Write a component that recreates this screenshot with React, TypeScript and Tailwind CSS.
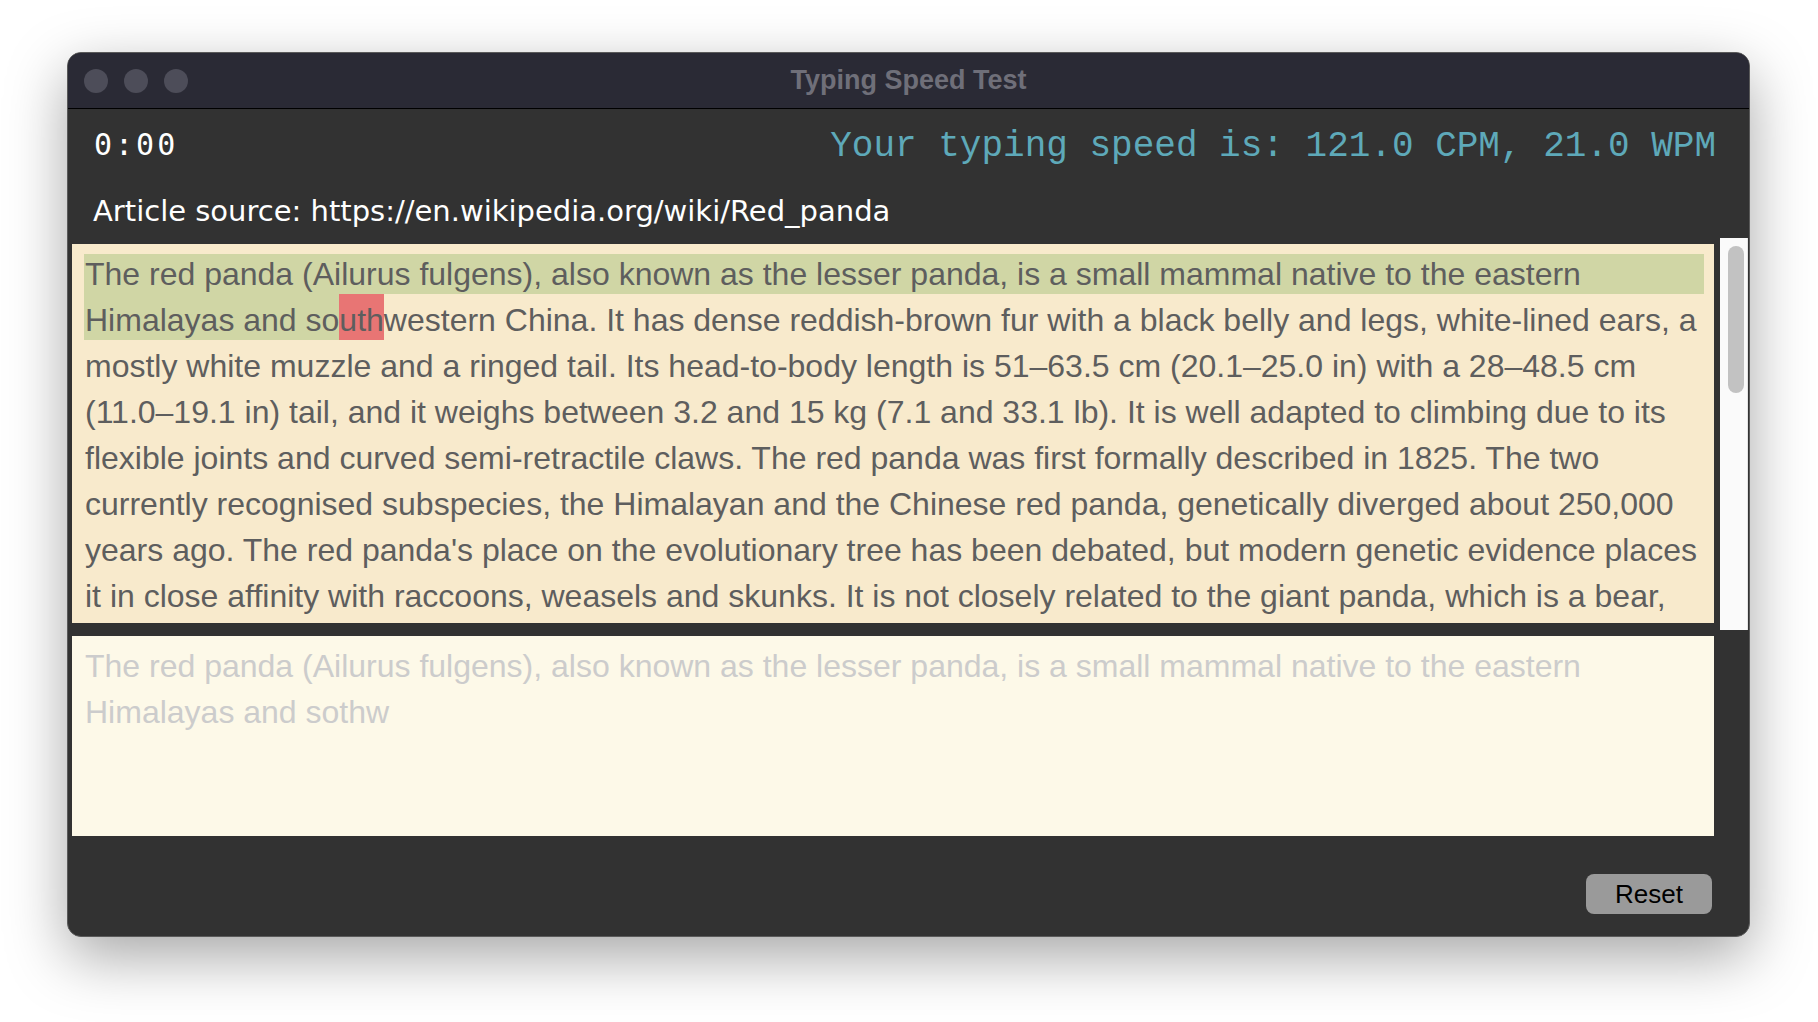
import React from 'react';

const articleLines = [
  'mostly white muzzle and a ringed tail. Its head-to-body length is 51–63.5 cm (20.1–25.0 in) with a 28–48.5 cm',
  '(11.0–19.1 in) tail, and it weighs between 3.2 and 15 kg (7.1 and 33.1 lb). It is well adapted to climbing due to its',
  'flexible joints and curved semi-retractile claws. The red panda was first formally described in 1825. The two',
  'currently recognised subspecies, the Himalayan and the Chinese red panda, genetically diverged about 250,000',
  "years ago. The red panda's place on the evolutionary tree has been debated, but modern genetic evidence places",
  'it in close affinity with raccoons, weasels and skunks. It is not closely related to the giant panda, which is a bear,',
];

const App: React.FC = () => {
  return (
    <div className="min-h-screen w-full bg-white pl-[67px] pt-[52px]">
      <div className="flex h-[885px] w-[1683px] flex-col overflow-hidden rounded-[14px] border border-[#5a5a5a] bg-[#323232] shadow-[0_20px_60px_rgba(0,0,0,0.35)]">
        {/* Title bar */}
        <div className="grid h-[56px] shrink-0 grid-cols-[1fr_auto_1fr] items-center border-b border-black bg-[#2a2a35] px-[16px]">
          <div className="flex gap-[16px]">
            <span className="h-[24px] w-[24px] rounded-full bg-[#4d4d59]" />
            <span className="h-[24px] w-[24px] rounded-full bg-[#4d4d59]" />
            <span className="h-[24px] w-[24px] rounded-full bg-[#4d4d59]" />
          </div>
          <div className="font-['Liberation_Sans',Arial,sans-serif] text-[27px] font-bold text-[#6f6f79]">
            Typing Speed Test
          </div>
          <div />
        </div>

        <div className="flex flex-1 flex-col pl-[4px] pr-[1px]">
          {/* Timer + speed */}
          <div className="flex h-[64px] shrink-0 items-center justify-between pl-[22px] pr-[32px] pt-[12px]">
            <span className="mb-[4px] font-['DejaVu_Sans_Mono',monospace] text-[30px] leading-none tracking-[3px] text-white">
              0:00
            </span>
            <span className="font-['Liberation_Mono','Courier_New',monospace] text-[36px] leading-none text-[#5ea9b9]">
              Your typing speed is: 121.0 CPM, 21.0 WPM
            </span>
          </div>

          {/* Source */}
          <div className="flex h-[65px] shrink-0 items-center pl-[21px] pt-[12px] font-['DejaVu_Sans',sans-serif] text-[29px] leading-none text-white">
            Article source: https://en.wikipedia.org/wiki/Red_panda
          </div>

          {/* Article + scrollbar */}
          <div className="flex h-[392px] shrink-0 gap-[6px]">
            <div className="mt-[6px] h-[379px] w-[1642px] overflow-hidden bg-[#f8eacc] pl-[12px] pr-[10px] pt-[10px] font-['Liberation_Sans',Arial,sans-serif] text-[32px] text-[#5e5e5e]">
              <div className="h-[40px] whitespace-pre bg-[#d0d6a5] pl-px leading-[40px]">
                The red panda (Ailurus fulgens), also known as the lesser panda, is a small mammal native to the eastern
              </div>
              <div className="flex h-[46px] whitespace-pre leading-[40px]">
                <span className="h-[46px] bg-[#d0d6a5] pl-px pt-[6px]">Himalayas and so</span>
                <span className="h-[46px] bg-[#e87574] pt-[6px]">uth</span>
                <span className="h-[46px] pt-[6px]">
                  western China. It has dense reddish-brown fur with a black belly and legs, white-lined ears, a
                </span>
              </div>
              {articleLines.map((line) => (
                <div key={line} className="h-[46px] whitespace-pre pl-px pt-[6px] leading-[40px]">
                  {line}
                </div>
              ))}
            </div>
            <div className="h-[392px] w-[28px] border-r border-[#e4e4e4] bg-[#fafafa] pl-[8px] pt-[8px]">
              <div className="h-[147px] w-[16px] rounded-full bg-[#c2c2c2]" />
            </div>
          </div>

          {/* Typed input */}
          <div className="mt-[6px] h-[200px] w-[1642px] shrink-0 bg-[#fdf9e8] pl-[13px] pt-[10px] font-['Liberation_Sans',Arial,sans-serif] text-[32px] leading-[40px] text-[#cccccc]">
            <div className="h-[40px] whitespace-pre">
              The red panda (Ailurus fulgens), also known as the lesser panda, is a small mammal native to the eastern
            </div>
            <div className="h-[46px] whitespace-pre pt-[6px]">Himalayas and sothw</div>
          </div>

          {/* Reset */}
          <div className="mt-[38px] flex justify-end pr-[36px]">
            <button className="h-[40px] w-[126px] rounded-[8px] bg-[#9a9a9a] font-['Liberation_Sans',Arial,sans-serif] text-[26px] leading-none text-black">
              Reset
            </button>
          </div>
        </div>
      </div>
    </div>
  );
};

export default App;
